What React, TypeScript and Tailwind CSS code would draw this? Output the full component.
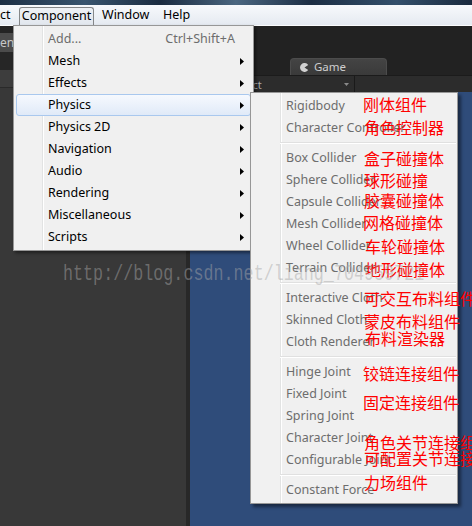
import React from "react";

type MainItem = {
  label: string;
  shortcut?: string;
  disabled?: boolean;
  arrow?: boolean;
  active?: boolean;
};

const mainItems: MainItem[] = [
  { label: "Add...", shortcut: "Ctrl+Shift+A", disabled: true },
  { label: "Mesh", arrow: true },
  { label: "Effects", arrow: true },
  { label: "Physics", arrow: true, active: true },
  { label: "Physics 2D", arrow: true },
  { label: "Navigation", arrow: true },
  { label: "Audio", arrow: true },
  { label: "Rendering", arrow: true },
  { label: "Miscellaneous", arrow: true },
  { label: "Scripts", arrow: true },
];

const subGroups: string[][] = [
  ["Rigidbody", "Character Controller"],
  [
    "Box Collider",
    "Sphere Collider",
    "Capsule Collider",
    "Mesh Collider",
    "Wheel Collider",
    "Terrain Collider",
  ],
  ["Interactive Cloth", "Skinned Cloth", "Cloth Renderer"],
  ["Hinge Joint", "Fixed Joint", "Spring Joint", "Character Joint", "Configurable Joint"],
  ["Constant Force"],
];

const notes: { text: string; cls: string }[] = [
  { text: "刚体组件", cls: "left-[363px] top-[96px]" },
  { text: "角色控制器", cls: "left-[364px] top-[119px]" },
  { text: "盒子碰撞体", cls: "left-[364px] top-[150px]" },
  { text: "球形碰撞", cls: "left-[364px] top-[172px]" },
  { text: "胶囊碰撞体", cls: "left-[364px] top-[192px]" },
  { text: "网格碰撞体", cls: "left-[363px] top-[214px]" },
  { text: "车轮碰撞体", cls: "left-[365px] top-[238px]" },
  { text: "地形碰撞体", cls: "left-[365px] top-[261px]" },
  { text: "可交互布料组件", cls: "left-[364px] top-[290px]" },
  { text: "蒙皮布料组件", cls: "left-[364px] top-[313px]" },
  { text: "布料渲染器", cls: "left-[365px] top-[330px]" },
  { text: "铰链连接组件", cls: "left-[363px] top-[365px]" },
  { text: "固定连接组件", cls: "left-[363px] top-[394px]" },
  { text: "角色关节连接组件", cls: "left-[364px] top-[434px]" },
  { text: "可配置关节连接组件", cls: "left-[364px] top-[450px]" },
  { text: "力场组件", cls: "left-[364px] top-[474px]" },
];

function RightArrow() {
  return (
    <svg width="4" height="7" viewBox="0 0 4 7" className="block">
      <polygon points="0,0 4,3.5 0,7" fill="#000" />
    </svg>
  );
}

function GameIcon() {
  return (
    <svg width="9" height="9" viewBox="0 0 8 8" className="block">
      <path d="M7.28 1.71 A4 4 0 1 0 7.28 6.29 L4 4 Z" fill="#d2d2d2" />
    </svg>
  );
}

function MainMenu() {
  return (
    <div className="absolute left-[13px] top-[25px] w-[241px] border border-[#979797] py-[2px] bg-[linear-gradient(to_right,#f1f1f1_28px,#e2e3e3_28px,#e2e3e3_29px,#ffffff_29px,#ffffff_30px,#f0f0f0_30px)] shadow-[2px_2px_3px_rgba(0,0,0,0.45)] text-[12.5px] leading-none">
      {mainItems.map((it) => (
        <div
          key={it.label}
          className={
            it.active
              ? "h-[22px] mx-[2px] flex items-center pl-[31px] pr-[6px] border border-[#a9c8ee] rounded-[3px] bg-[linear-gradient(to_bottom,#f6f9fe,#e0eaf8)]"
              : "h-[22px] mx-[2px] flex items-center pl-[32px] pr-[7px]"
          }
        >
          <span className={it.disabled ? "flex-1 text-[#6d6d6d]" : "flex-1 text-black"}>
            {it.label}
          </span>
          {it.shortcut ? (
            <span className="text-[#6d6d6d] pr-[9px]">{it.shortcut}</span>
          ) : null}
          {it.arrow ? <RightArrow /> : null}
        </div>
      ))}
    </div>
  );
}

function SubMenu() {
  return (
    <div className="absolute left-[250px] top-[92px] w-[208px] border border-[#979797] py-[2px] bg-[linear-gradient(to_right,#f1f1f1_29px,#e2e3e3_29px,#e2e3e3_30px,#ffffff_30px,#ffffff_31px,#f0f0f0_31px)] shadow-[3px_3px_3px_rgba(0,0,0,0.45)] text-[12.5px] leading-none text-[#6d6d6d]">
      {subGroups.map((group, gi) => (
        <div key={gi}>
          {gi > 0 ? (
            <div className="h-[8px] flex flex-col justify-center pl-[29px] pr-[1px]">
              <div className="h-[1px] bg-[#e0e0e0]" />
              <div className="h-[1px] bg-white" />
            </div>
          ) : null}
          {group.map((label) => (
            <div key={label} className="h-[22px] flex items-center pl-[35px] whitespace-nowrap">
              {label}
            </div>
          ))}
        </div>
      ))}
    </div>
  );
}

export default function App() {
  return (
    <div className="relative w-[472px] h-[526px] overflow-hidden bg-[#383838] flex flex-col font-['Noto_Sans',sans-serif]">
      {/* window title strip */}
      <div className="h-[5px] shrink-0 bg-[linear-gradient(to_right,#1c2f45,#39556f_18%,#1a2b40_34%,#4b6781_50%,#1c2e44_66%,#34506c_84%,#1a2a3e)]" />

      {/* menubar */}
      <div className="h-[21px] shrink-0 flex bg-[linear-gradient(to_bottom,#f7f9fc,#e5eaf1)] border-b border-[#fbfcfd] text-[12.5px] text-black leading-none">
        <span className="w-[19px] flex items-center">ct</span>
        <div className="w-[75px] mt-[2px] flex items-center justify-center border border-b-0 border-[#858789] rounded-t-[3px] bg-[linear-gradient(to_bottom,#eef1f5,#e2e7ee)]">
          Component
        </div>
        <span className="w-[69px] pl-[8px] flex items-center">Window</span>
        <span className="flex items-center">Help</span>
      </div>

      {/* editor body */}
      <div className="flex-1 flex">
        {/* left panel */}
        <div className="w-[186px] flex flex-col">
          <div className="h-[7px] bg-[#242424]" />
          <div className="h-[19px] flex bg-[#242424]">
            <div className="w-[70px] bg-[#4b4b4b] text-[#c8c8c8] text-[12px] leading-[19px]">ent</div>
          </div>
          <div className="h-[18px] bg-[#262626]" />
          <div className="h-[18px] bg-[#3d3d3d] border-b border-[#2a2a2a]" />
          <div className="flex-1 bg-[#383838]" />
        </div>
        <div className="w-[4px] bg-[#282828]" />
        {/* right panel */}
        <div className="flex-1 flex flex-col">
          <div className="h-[32px] bg-[#222222]" />
          <div className="h-[17px] flex bg-[#222222]">
            <div className="ml-[100px] w-[97px] rounded-t-[4px] border-t border-x border-[#4c4c4c] bg-[linear-gradient(to_bottom,#444444,#3a3a3a)] flex items-center gap-[5px] pl-[9px] text-[11.5px] leading-none text-[#cfcfcf]">
              <GameIcon />
              <span>Game</span>
            </div>
          </div>
          <div className="h-[17px] flex bg-[#2c2c2c] border-t border-[#1b1b1b] text-[11px] leading-none text-[#aaaaaa]">
            <div className="w-[165px] flex items-center justify-between pl-[12px] pr-[5px] border-r border-[#1a1a1a]">
              <span>Free Aspect</span>
              <svg width="5" height="3" viewBox="0 0 5 3" className="block">
                <polygon points="0,0 5,0 2.5,3" fill="#8a8a8a" />
              </svg>
            </div>
          </div>
          <div className="flex-1 bg-[#2f4c7a]" />
        </div>
      </div>

      <MainMenu />
      <SubMenu />

      {/* red annotations */}
      {notes.map((n) => (
        <div
          key={n.text}
          className={
            "absolute whitespace-nowrap text-[16px] leading-none text-[#ff0000] font-['Noto_Sans_CJK_SC',sans-serif] " +
            n.cls
          }
        >
          {n.text}
        </div>
      ))}

      {/* watermark */}
      <div className="absolute left-[63px] top-[264px] whitespace-nowrap origin-left scale-x-[0.76] font-['Liberation_Mono',monospace] text-[22px] leading-none text-[rgba(167,167,167,0.48)] pointer-events-none">
        http://blog.csdn.net/liang_704959721
      </div>
    </div>
  );
}
